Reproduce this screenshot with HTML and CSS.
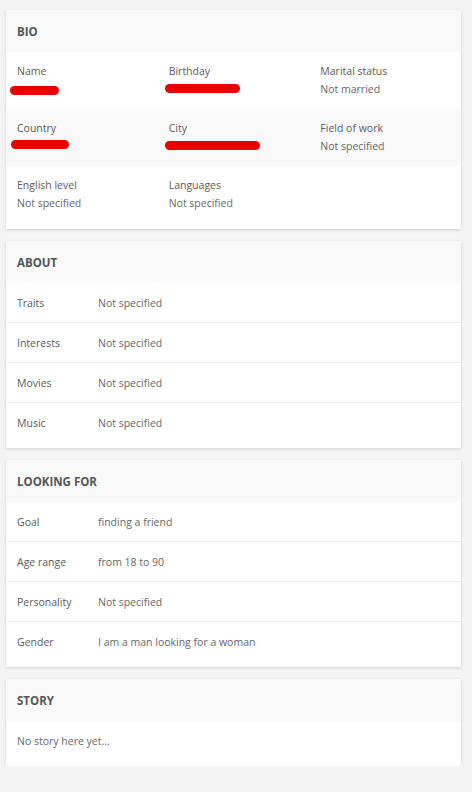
FILE: index.html
```html
<!DOCTYPE html>
<html>
<head>
<meta charset="utf-8">
<link rel="stylesheet" href="styles.css">
</head>
<body>
<div class="page">
  <section class="card">
    <div class="card-head">BIO</div>
    <div class="bio-row">
      <div class="bio-cell"><div class="lbl">Name</div><div class="val"><span class="redact r-name"></span></div></div>
      <div class="bio-cell"><div class="lbl">Birthday</div><div class="val"><span class="redact r-birth"></span></div></div>
      <div class="bio-cell"><div class="lbl">Marital status</div><div class="val">Not married</div></div>
    </div>
    <div class="bio-row alt">
      <div class="bio-cell"><div class="lbl">Country</div><div class="val"><span class="redact r-country"></span></div></div>
      <div class="bio-cell"><div class="lbl">City</div><div class="val"><span class="redact r-city"></span></div></div>
      <div class="bio-cell"><div class="lbl">Field of work</div><div class="val">Not specified</div></div>
    </div>
    <div class="bio-row last">
      <div class="bio-cell"><div class="lbl">English level</div><div class="val">Not specified</div></div>
      <div class="bio-cell"><div class="lbl">Languages</div><div class="val">Not specified</div></div>
      <div class="bio-cell"></div>
    </div>
  </section>

  <section class="card">
    <div class="card-head">ABOUT</div>
    <div class="list">
      <div class="item"><span class="key">Traits</span><span class="value">Not specified</span></div>
      <div class="item"><span class="key">Interests</span><span class="value">Not specified</span></div>
      <div class="item"><span class="key">Movies</span><span class="value">Not specified</span></div>
      <div class="item"><span class="key">Music</span><span class="value">Not specified</span></div>
    </div>
  </section>

  <section class="card">
    <div class="card-head">LOOKING FOR</div>
    <div class="list">
      <div class="item"><span class="key">Goal</span><span class="value">finding a friend</span></div>
      <div class="item"><span class="key">Age range</span><span class="value">from 18 to 90</span></div>
      <div class="item"><span class="key">Personality</span><span class="value">Not specified</span></div>
      <div class="item"><span class="key">Gender</span><span class="value">I am a man looking for a woman</span></div>
    </div>
  </section>

  <section class="card">
    <div class="card-head">STORY</div>
    <div class="list">
      <div class="item"><span class="value">No story here yet...</span></div>
    </div>
  </section>
</div>
</body>
</html>
```
FILE: styles.css
```css
html, body {
  margin: 0;
  padding: 0;
  background: #f4f4f4;
  font-family: "Open Sans", "Liberation Sans", sans-serif;
  color: #5a5a5a;
}
* { box-sizing: border-box; }
.page {
  width: 455px;
  margin-left: 6px;
  padding-top: 10px;
  display: flex;
  flex-direction: column;
  gap: 12px;
}
.card {
  background: #fff;
  box-shadow: 0 1px 3px rgba(0,0,0,0.15);
}
.card-head {
  height: 42px;
  display: flex;
  align-items: center;
  padding-left: 11px;
  background: #f9f9f9;
  font-size: 11.5px;
  font-weight: 700;
  color: #555;
}
.bio-row {
  display: grid;
  grid-template-columns: 1fr 1fr 1fr;
  height: 57px;
  padding-top: 10px;
}
.bio-row.alt { background: #f9f9f9; }
.bio-row.last { height: 63px; }
.bio-cell {
  padding-left: 11px;
  font-size: 10.5px;
  line-height: 18px;
}
.lbl { color: #5a5a5a; height: 18px; }
.val { color: #666; height: 18px; position: relative; }
.redact {
  position: absolute;
  background: #e60000;
  height: 9px;
  border-radius: 5px;
}
.r-name { left: -7px; top: 6px; width: 49px; }
.r-birth { left: -4px; top: 4px; width: 75px; }
.r-country { left: -6px; top: 3px; width: 58px; }
.r-city { left: -4px; top: 4px; width: 95px; }
.list { padding-bottom: 6px; }
.item {
  display: flex;
  align-items: center;
  height: 40px;
  padding-left: 11px;
  border-top: 1px solid #eeeeee;
  font-size: 10.5px;
}
.item:first-child { border-top: none; height: 39px; }
.key { width: 81px; flex: none; color: #5a5a5a; }
.value { color: #666; }
```
